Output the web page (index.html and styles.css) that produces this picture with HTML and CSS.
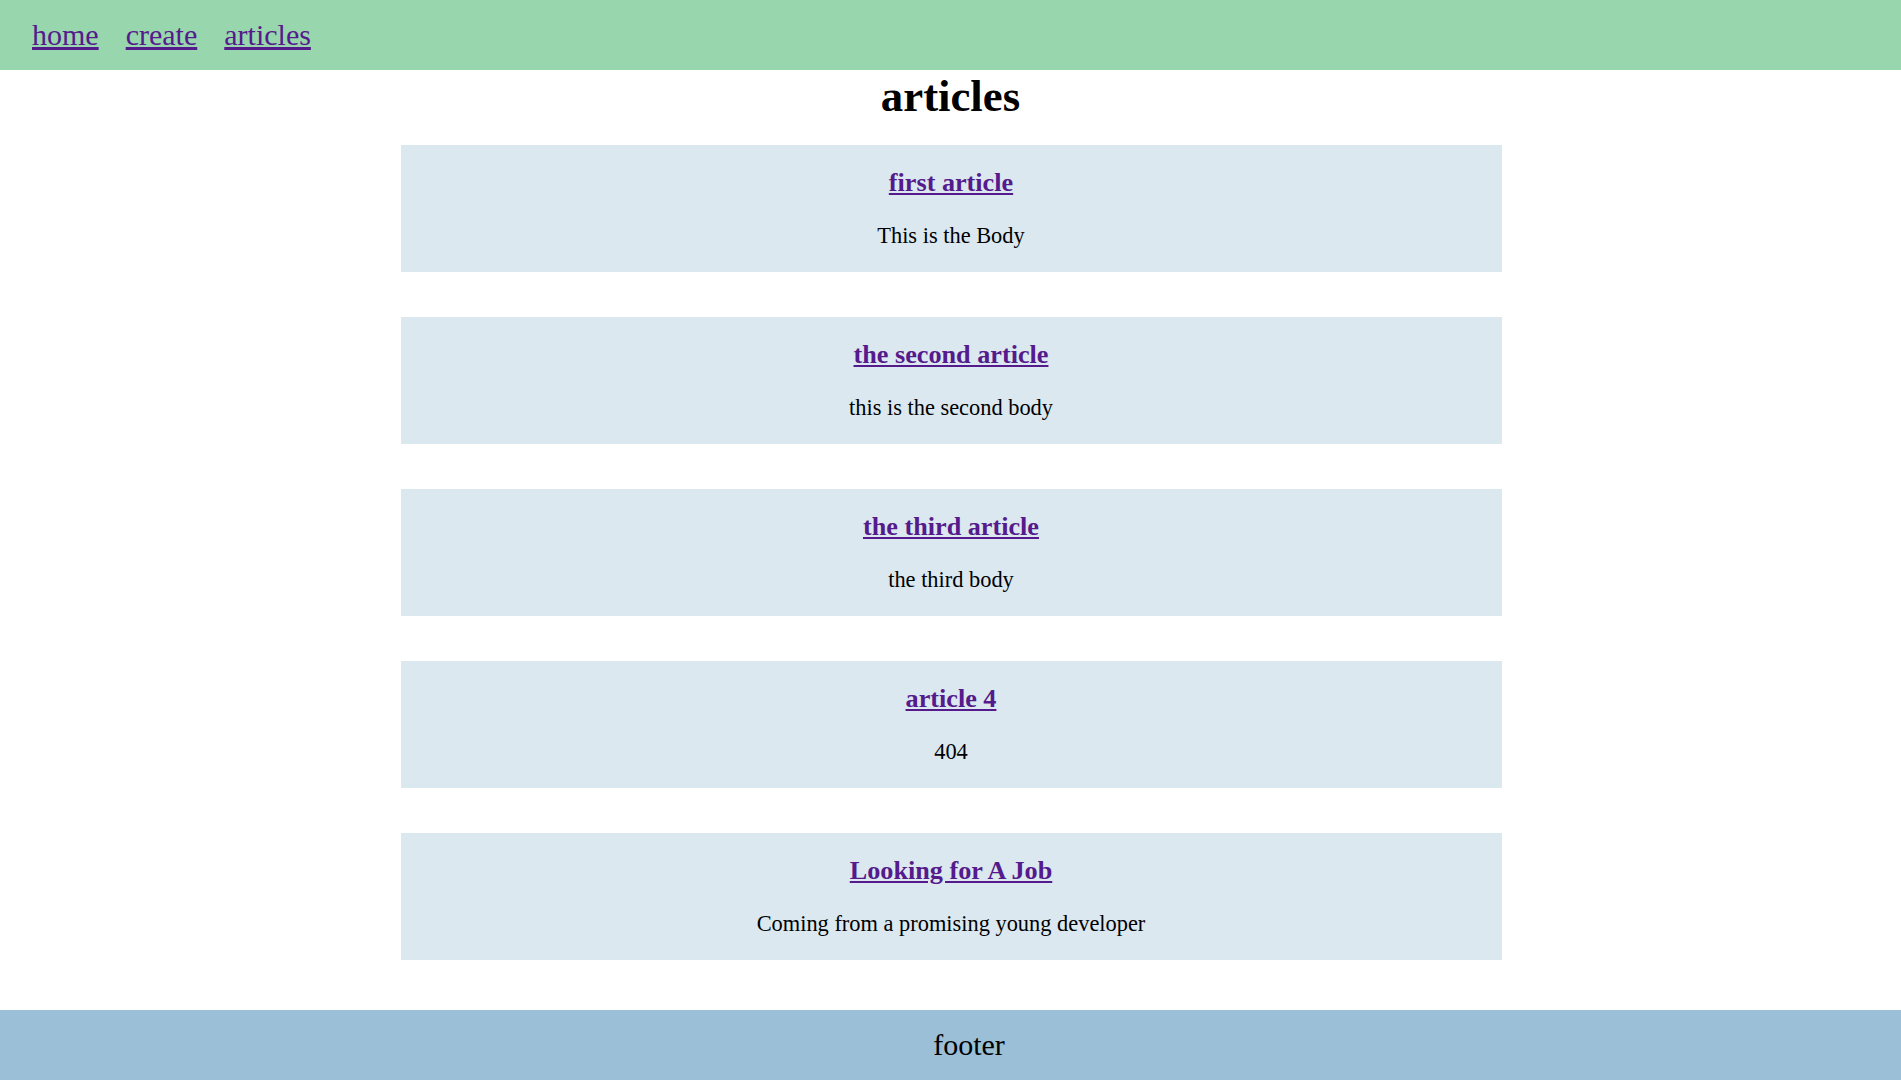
FILE: index.html
```html
<!DOCTYPE html>
<html lang="en">
<head>
<meta charset="utf-8">
<title>articles</title>
<link rel="stylesheet" href="styles.css">
</head>
<body>
<header class="topbar">
  <nav class="nav">
    <a href="#" class="nav-link">home</a>
    <a href="#" class="nav-link">create</a>
    <a href="#" class="nav-link">articles</a>
  </nav>
</header>
<main class="content">
  <h1 class="page-title">articles</h1>
  <div class="article-list">
    <article class="card">
      <h3 class="card-title"><a href="#">first article</a></h3>
      <p class="card-body">This is the Body</p>
    </article>
    <article class="card">
      <h3 class="card-title"><a href="#">the second article</a></h3>
      <p class="card-body">this is the second body</p>
    </article>
    <article class="card">
      <h3 class="card-title"><a href="#">the third article</a></h3>
      <p class="card-body">the third body</p>
    </article>
    <article class="card">
      <h3 class="card-title"><a href="#">article 4</a></h3>
      <p class="card-body">404</p>
    </article>
    <article class="card">
      <h3 class="card-title"><a href="#">Looking for A Job</a></h3>
      <p class="card-body">Coming from a promising young developer</p>
    </article>
  </div>
</main>
<footer class="footer">footer</footer>
</body>
</html>
```

FILE: styles.css
```css
html, body {
  margin: 0;
  padding: 0;
}

body {
  font-family: "Liberation Serif", "Times New Roman", serif;
  color: #000;
  background: #fff;
}

a {
  color: #551a8b;
  text-decoration: underline;
}

.topbar {
  height: 70px;
  background: #98d6ae;
  display: flex;
  align-items: center;
  padding-left: 32px;
}

.nav {
  display: flex;
  gap: 27px;
  font-size: 30px;
  line-height: 34px;
}

.content {
  display: flex;
  flex-direction: column;
  align-items: center;
  padding-bottom: 50px;
}

.page-title {
  margin: 0 0 23px;
  font-size: 44.8px;
  line-height: 52px;
  font-weight: bold;
  text-align: center;
}

.article-list {
  display: flex;
  flex-direction: column;
  gap: 45px;
  width: 1101px;
  margin-left: 1px;
}

.card {
  background: #dbe8f0;
  padding: 23px 0 23px;
  display: flex;
  flex-direction: column;
  gap: 25px;
  text-align: center;
}

.card-title {
  margin: 0;
  font-size: 26.2px;
  line-height: 30px;
  font-weight: bold;
}

.card-body {
  margin: 0;
  font-size: 22.4px;
  line-height: 26px;
}

.footer {
  height: 70px;
  background: #9abfd7;
  display: flex;
  align-items: center;
  justify-content: center;
  padding-left: 37px;
  font-size: 30px;
  line-height: 34px;
}
```
